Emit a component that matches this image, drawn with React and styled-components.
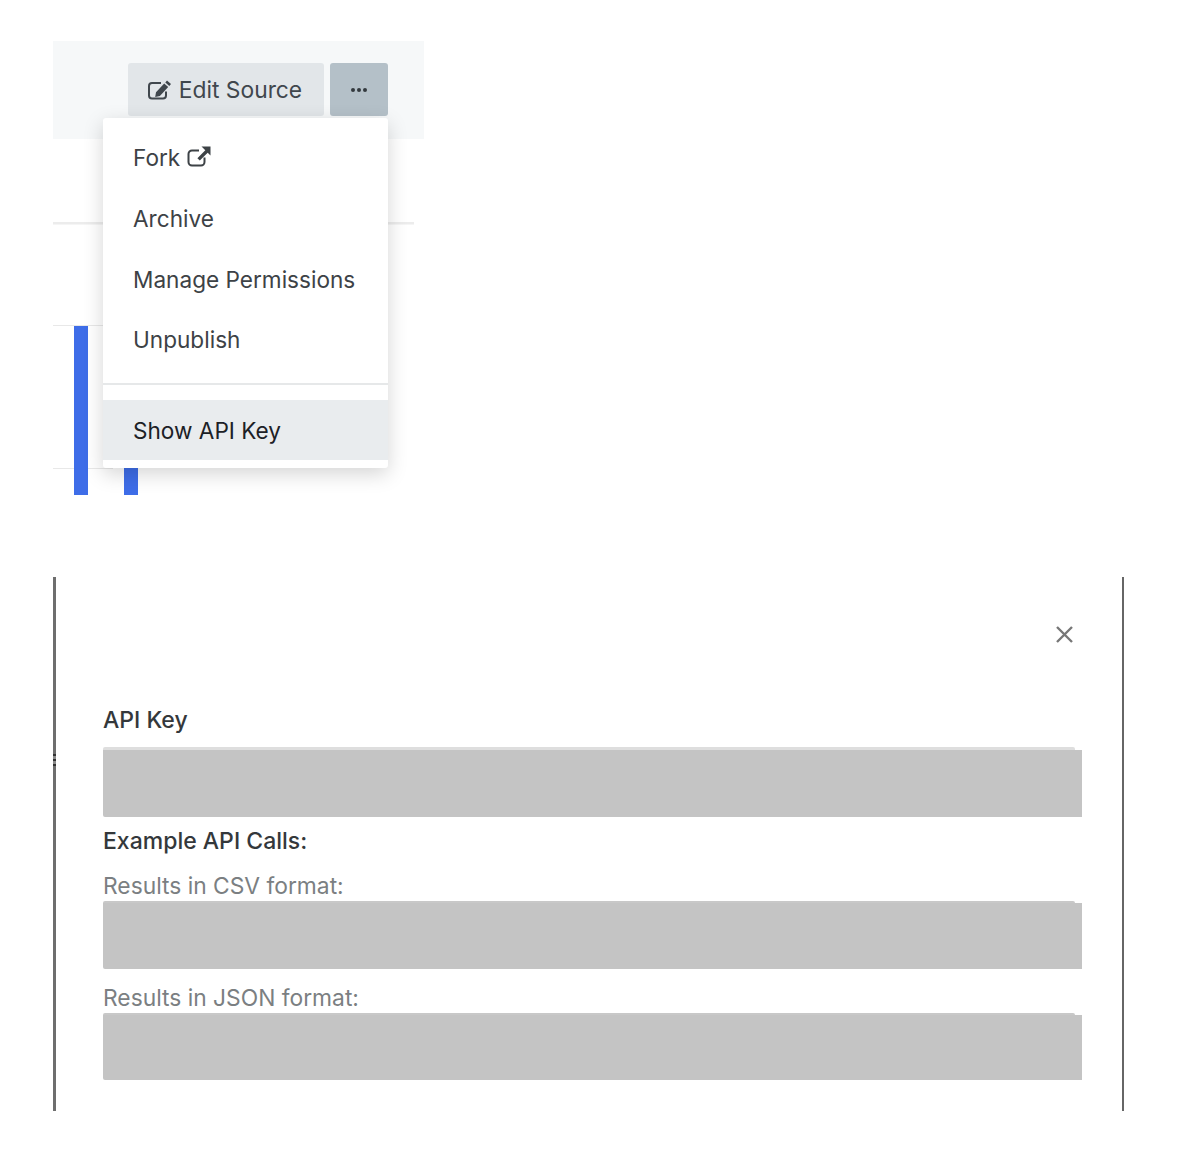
import React from "react";
import styled, { createGlobalStyle } from "styled-components";

const GlobalStyle = createGlobalStyle`
  html, body {
    margin: 0;
    padding: 0;
    background: #fff;
    font-family: Inter, "Liberation Sans", sans-serif;
    color: #333;
  }
`;

const Page = styled.div`
  width: 1200px;
  height: 1166px;
  padding: 41px 0 0 53px;
  box-sizing: border-box;
  overflow: hidden;
`;

const Scene = styled.section`
  position: relative;
  width: 371px;
  height: 454px;
`;

const Toolbar = styled.div`
  height: 98px;
  box-sizing: border-box;
  padding: 22px 36px 0 0;
  display: flex;
  justify-content: flex-end;
  align-items: flex-start;
  gap: 6px;
  background: #f6f8f9;
`;

const Button = styled.button`
  height: 53px;
  width: ${(p) => p.$width}px;
  padding: 0 ${(p) => (p.$active ? 0 : 2)}px 0 0;
  border: 0;
  border-radius: 3px;
  display: flex;
  align-items: center;
  justify-content: center;
  gap: 7px;
  font: 400 22.8px Inter, "Liberation Sans", sans-serif;
  color: #40474d;
  background: ${(p) => (p.$active ? "#b4c0c8" : "#e2e6e9")};
`;

const Chart = styled.svg`
  display: block;
`;

const Menu = styled.div`
  position: absolute;
  top: 77px;
  left: 50px;
  width: 285px;
  height: 350px;
  box-sizing: border-box;
  padding: 9px 0 8px;
  background: #fff;
  border-radius: 3px;
  box-shadow: 0 6px 20px rgba(0, 0, 0, 0.17);
`;

const MenuItem = styled.div`
  height: ${(p) => (p.$selected ? 60 : 60.5)}px;
  box-sizing: border-box;
  padding: ${(p) => (p.$selected ? 0 : 2)}px 0 0 30px;
  display: flex;
  align-items: center;
  gap: 7px;
  font-size: 22.6px;
  color: ${(p) => (p.$selected ? "#1c2126" : "#3d4246")};
  background: ${(p) => (p.$selected ? "#e9ecee" : "transparent")};

  svg {
    margin-top: -3px;
  }
`;

const ForkItem = styled(MenuItem)`
  padding-top: 0;
  svg {
    margin-top: -1px;
  }
`;

const MenuDivider = styled.div`
  height: 2px;
  margin: 14px 0 15px;
  background: #e6e8e9;
`;

const Modal = styled.section`
  position: relative;
  width: 1071px;
  height: 534px;
  margin-top: 82px;
  box-sizing: border-box;
  padding: 0 40px 0 47px;
  border-left: 3px solid #6e6e6e;
  border-right: 2px solid #666;
`;

const Grip = styled.div`
  position: absolute;
  top: 177px;
  left: -3px;
  width: 3px;
  height: 12px;
  background: repeating-linear-gradient(#333 0 2px, #8a8a8a 2px 5px);
`;

const CloseRow = styled.div`
  height: 129px;
  padding: 49px 9px 0 0;
  box-sizing: border-box;
  display: flex;
  justify-content: flex-end;
  color: #777;
`;

const Heading = styled.div`
  margin-top: ${(p) => p.$top || 0}px;
  font-size: 23px;
  font-weight: ${(p) => p.$weight || 500};
  line-height: 28px;
  color: #34383b;
`;

const Caption = styled.div`
  margin-top: ${(p) => p.$top}px;
  font-size: 22.8px;
  line-height: 28px;
  color: #7b7f82;
`;

const Field = styled.div`
  margin-top: ${(p) => p.$top}px;
`;

const EdgeStrip = styled.div`
  width: 972px;
  height: ${(p) => p.$height}px;
  border-radius: 2px 2px 0 0;
  background: ${(p) => p.$color};
`;

const Redaction = styled.div`
  height: ${(p) => p.$height}px;
  border-radius: 0 0 0 2px;
  background: #c4c4c4;
`;

const EditIcon = () => (
  <svg width="24" height="20" viewBox="0 0 24 20" fill="none">
    <path d="M18 11.5V15.5a3 3 0 0 1-3 3H4a3 3 0 0 1-3-3V6a3 3 0 0 1 3-3h9" stroke="currentColor" strokeWidth="2" />
    <path d="M19 0.5l4 3.6-1.7 1.9-4-3.6zM16.2 3.5l4 3.6-8.3 8.8-4.7 1 .8-4.6z" fill="currentColor" />
  </svg>
);

const ExternalIcon = () => (
  <svg width="24" height="21" viewBox="0 0 24 21" fill="none">
    <path d="M17.5 11.5V16a3.5 3.5 0 0 1-3.5 3.5H5A3.5 3.5 0 0 1 1.5 16V8A3.5 3.5 0 0 1 5 4.500h7" stroke="currentColor" strokeWidth="2" />
    <path d="M14.500 0.500H23.500V9.500L20.700 6.700 12.800 14.600 10.400 12.200 18.300 4.300z" fill="currentColor" />
  </svg>
);

const CloseIcon = () => (
  <svg width="17" height="17" viewBox="0 0 17 17" stroke="currentColor" strokeWidth="2.4">
    <path d="M1 1l15 15M16 1L1 16" />
  </svg>
);

const RedactedField = ({ top, edge, edgeHeight, height }) => (
  <Field $top={top}>
    <EdgeStrip $color={edge} $height={edgeHeight} />
    <Redaction $height={height} />
  </Field>
);

export default function App() {
  return (
    <Page>
      <GlobalStyle />
      <Scene>
        <Toolbar>
          <Button $width={196}>
            <EditIcon />
            Edit Source
          </Button>
          <Button $width={58} $active>
            <svg width="16" height="4" viewBox="0 0 16 4" fill="#33393e">
              <circle cx="2" cy="2" r="2" />
              <circle cx="8" cy="2" r="2" />
              <circle cx="14" cy="2" r="2" />
            </svg>
          </Button>
        </Toolbar>
        <Chart width="371" height="356" viewBox="0 0 371 356">
          <rect x="0" y="83" width="361" height="2.500" fill="#ececec" />
          <rect x="0" y="186" width="60" height="1" fill="#e8e8e8" />
          <rect x="0" y="329" width="60" height="1" fill="#e8e8e8" />
          <rect x="21" y="187" width="14" height="169" fill="#3e6de8" />
          <rect x="71" y="329" width="14" height="27" fill="#3e6de8" />
        </Chart>
        <Menu>
          <ForkItem>
            Fork
            <ExternalIcon />
          </ForkItem>
          <MenuItem>Archive</MenuItem>
          <MenuItem>Manage Permissions</MenuItem>
          <MenuItem>Unpublish</MenuItem>
          <MenuDivider />
          <MenuItem $selected>Show API Key</MenuItem>
        </Menu>
      </Scene>
      <Modal>
        <Grip />
        <CloseRow>
          <CloseIcon />
        </CloseRow>
        <Heading $weight={450}>API Key</Heading>
        <RedactedField top={13} edge="#dedede" edgeHeight={3} height={67} />
        <Heading $top={10}>Example API Calls:</Heading>
        <Caption $top={17}>Results in CSV format:</Caption>
        <RedactedField top={1} edge="#c8c8c8" edgeHeight={2} height={66} />
        <Caption $top={15}>Results in JSON format:</Caption>
        <RedactedField top={1} edge="#c8c8c8" edgeHeight={2} height={65} />
      </Modal>
    </Page>
  );
}
